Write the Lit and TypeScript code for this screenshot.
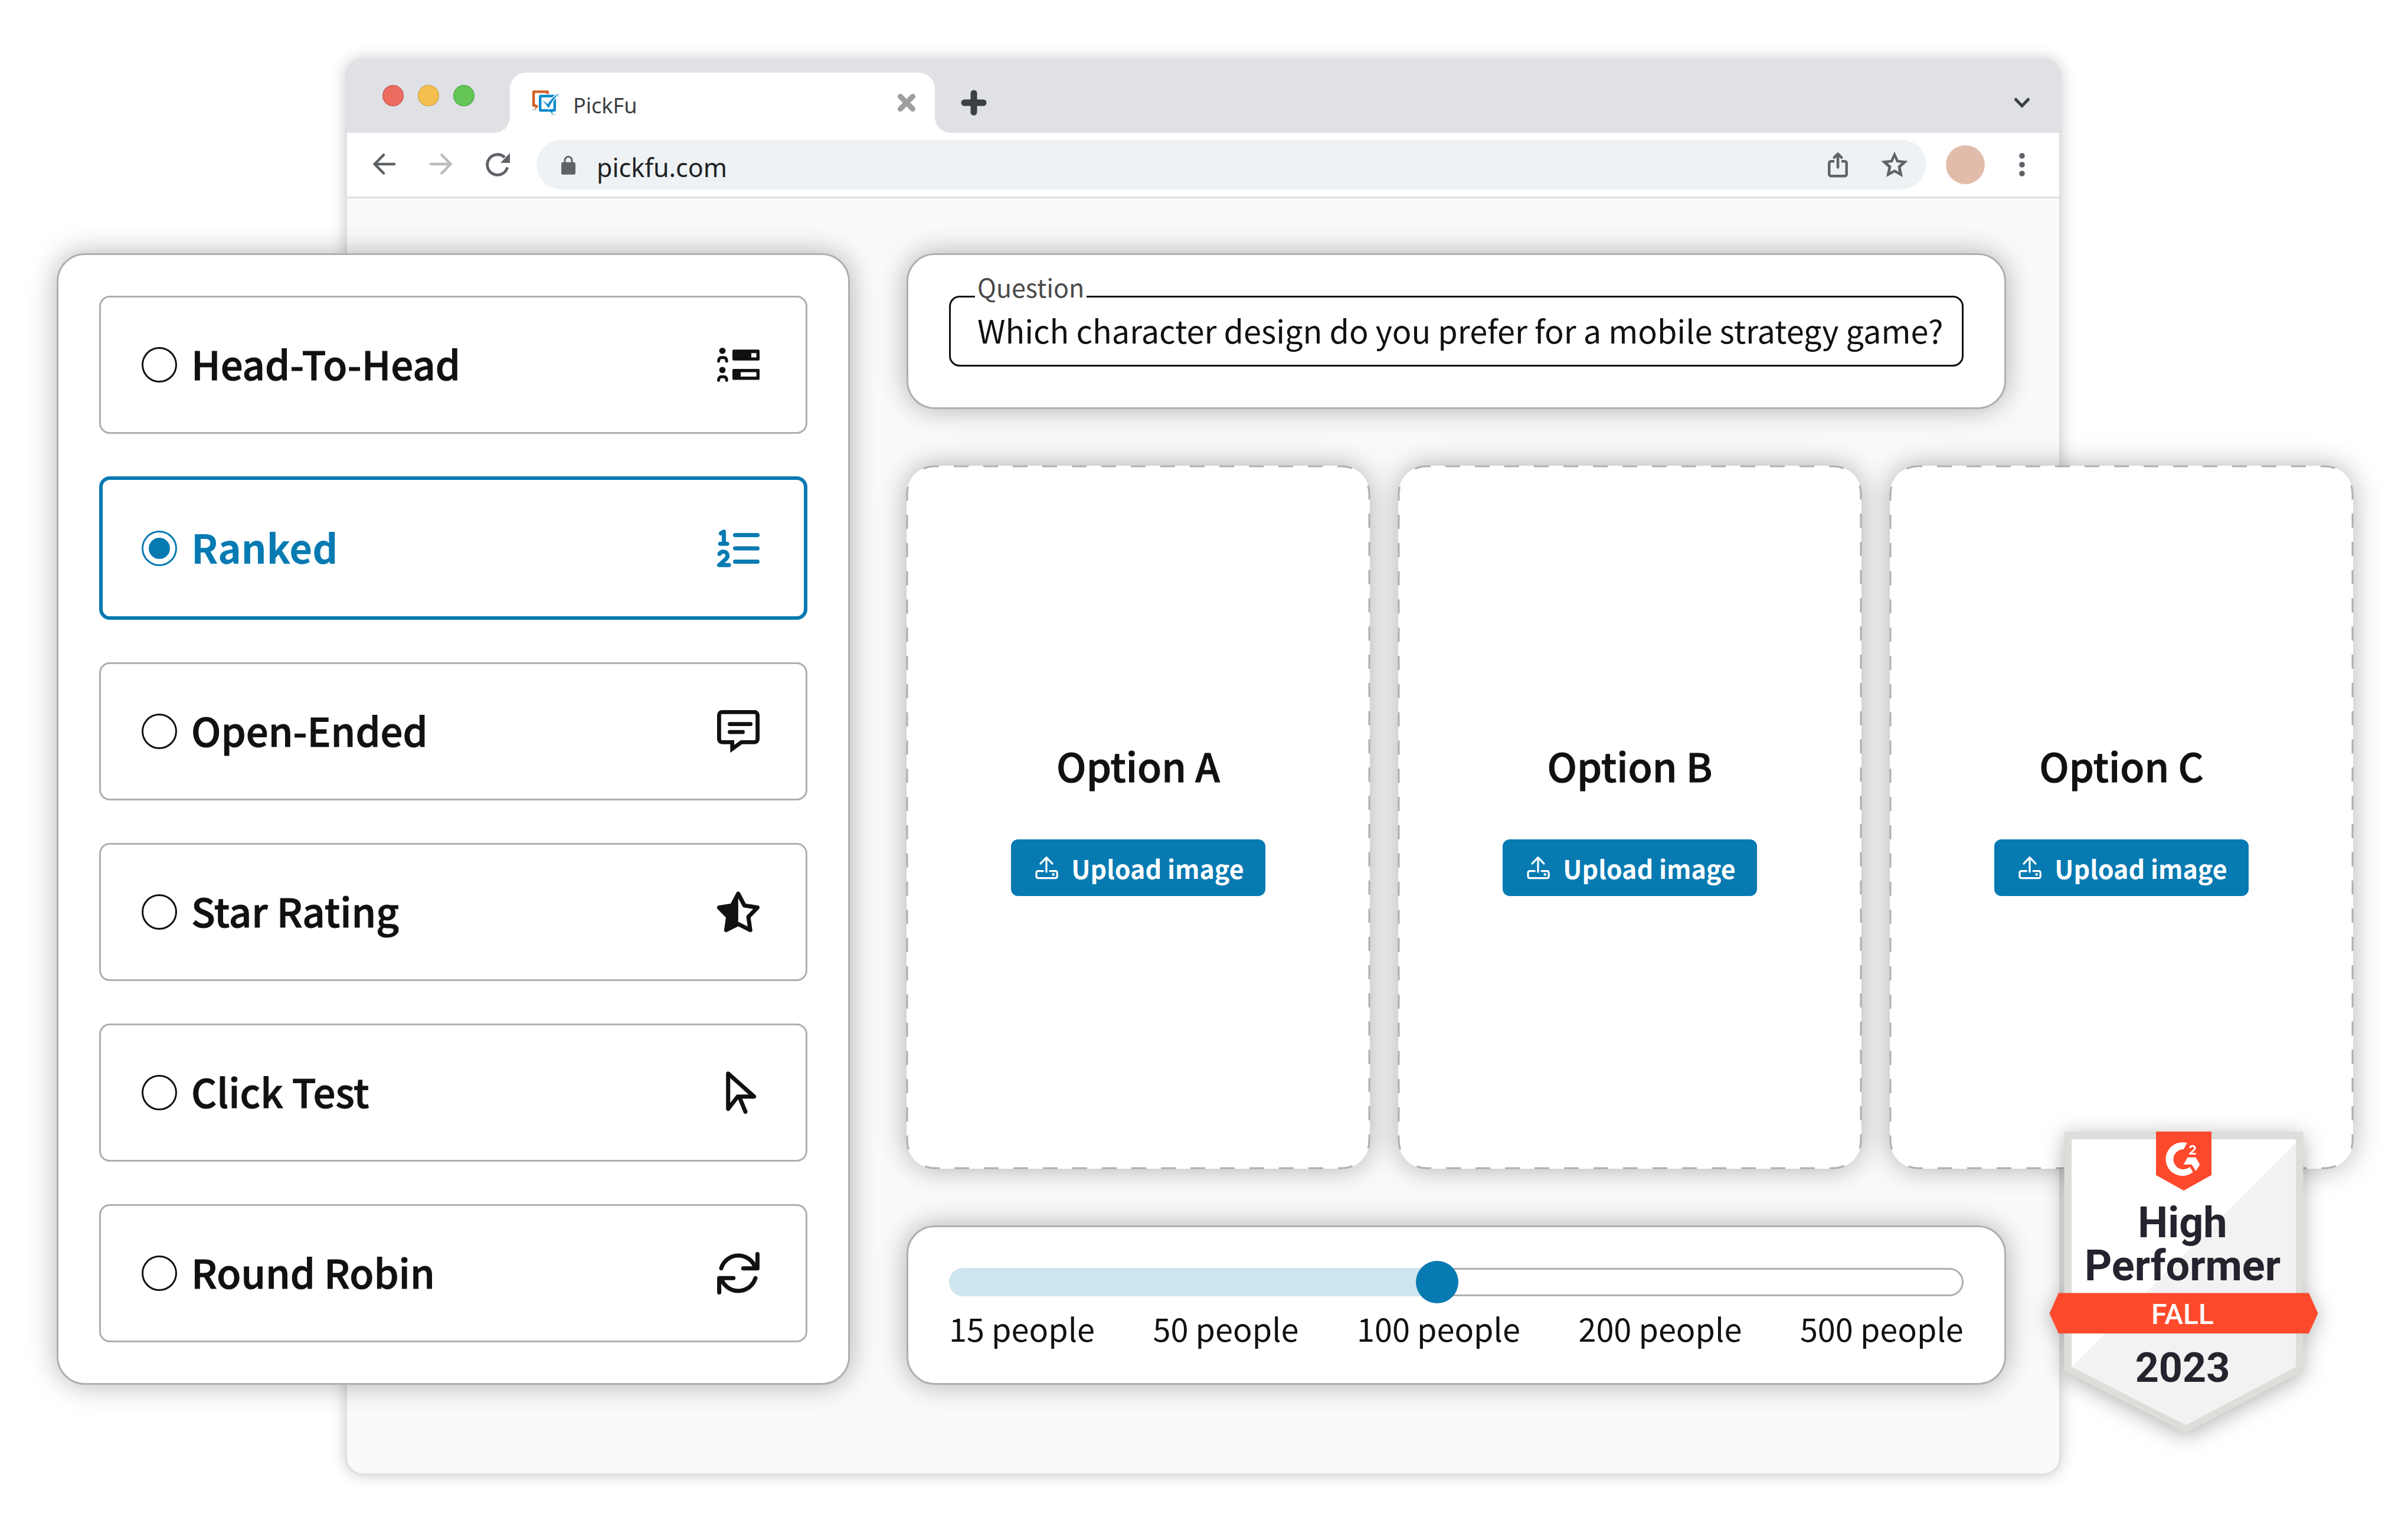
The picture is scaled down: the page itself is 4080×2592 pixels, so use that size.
import { LitElement, html, css, svg } from "lit";
import type { TemplateResult } from "lit";
import { customElement, property, state } from "lit/decorators.js";
import { classMap } from "lit/directives/class-map.js";

type PollType = { id: string; label: string; icon: TemplateResult };

const person = (dy: number) => svg`
  <g transform="translate(0 ${dy})">
    <circle cx="18" cy="21.3" r="5.4" fill="currentColor" />
    <path d="M11.5 38.8C11.5 34.8 13.6 32.8 16.6 32.8H20.2C23.2 32.8 25.2 34.8 25.2 38.8" fill="none"
      stroke="currentColor" stroke-width="5" stroke-linecap="round" />
  </g>`;

const POLL_TYPES: PollType[] = [
  {
    id: "head",
    label: "Head-To-Head",
    icon: svg`
      ${person(0)}${person(32.5)}
      <path fill="currentColor" fill-rule="evenodd"
        d="M37 19.3H79a2 2 0 0 1 2 2V35.7a2 2 0 0 1-2 2H37a2 2 0 0 1-2-2V21.3a2 2 0 0 1 2-2ZM67 25.2V32.6H75.6V25.2Z" />
      <path fill="currentColor" fill-rule="evenodd"
        d="M37 52H79a2 2 0 0 1 2 2V68.4a2 2 0 0 1-2 2H37a2 2 0 0 1-2-2V54a2 2 0 0 1 2-2ZM49 57.5V64.9H75.6V57.5Z" />`,
  },
  {
    id: "ranked",
    label: "Ranked",
    icon: svg`
      <g fill="none" stroke="currentColor" stroke-width="7" stroke-linecap="round" stroke-linejoin="round">
        <path d="M39.5 22.5H77.5M39.5 44.9H77.5M39.5 67.5H77.5" />
        <path d="M15.5 19.6L20.5 16.6V37.2M14.3 37.2H26" />
        <path d="M13 54.4C14.8 51.8 17 50.6 19.6 50.6C23.8 50.6 26.6 53.5 26.6 57.2C26.6 59.8 25.6 61.4 23.6 63.4L12.6 73.3H29" />
      </g>`,
  },
  {
    id: "open",
    label: "Open-Ended",
    icon: svg`
      <g fill="none" stroke="currentColor" stroke-width="6.8">
        <path d="M17.4 12.4H72.6A5 5 0 0 1 77.6 17.4V58.3A5 5 0 0 1 72.6 63.3H50.3L34.7 74.6V63.3H17.4A5 5 0 0 1 12.4 58.3V17.4A5 5 0 0 1 17.4 12.4Z" />
        <path d="M30.5 32.7H65.6M30.5 46.2H52.5" stroke-linecap="round" />
      </g>`,
  },
  {
    id: "star",
    label: "Star Rating",
    icon: svg`
      <path d="M44.8 14L34.3 33.7L12.4 37.3L27.7 53.3L24.4 75.7L44.8 65.4Z" fill="currentColor" />
      <path d="M44.8 14L55.3 34L77.4 37.5L62 53.3L65.2 75.7L44.8 65.4L24.4 75.7L27.7 53.3L12.4 37.5L34.3 34Z"
        fill="none" stroke="currentColor" stroke-width="7" stroke-linejoin="round" />`,
  },
  {
    id: "click",
    label: "Click Test",
    icon: svg`
      <g fill="none" stroke="currentColor" stroke-width="7" stroke-linecap="round" stroke-linejoin="round">
        <path d="M27.7 12.7L71.6 51.7H44L27.7 72.6Z" />
        <path d="M47 53L57 77.4" />
      </g>`,
  },
  {
    id: "round",
    label: "Round Robin",
    icon: svg`
      <g fill="none" stroke="currentColor" stroke-width="7" stroke-linecap="round" stroke-linejoin="round">
        <path d="M16 36.7A30.3 30.3 0 0 1 74 36.4M77.4 12.5V36.7H53.3" />
        <path d="M74 53.3A30.3 30.3 0 0 1 16 53.6M12.6 77.5V53.3H36.7" />
      </g>`,
  },
];

const OPTIONS = ["Option A", "Option B", "Option C"];
const AUDIENCES = [15, 50, 100, 200, 500];

/* Dashes for half of a card's outline: along one horizontal and one vertical edge. */
const CARD_DASHES = [
  ...Array(14).fill("25 25"),
  "25 41",
  ...Array(23).fill("24 23.8"),
  "24 41",
].join(" ");

const BASE = css`
  :host {
    box-sizing: border-box;
    display: block;
    font-family: "Noto Sans CJK SC", "Noto Sans", sans-serif;
    color: #111111;
  }
  *,
  *::before,
  *::after {
    box-sizing: border-box;
  }
  svg {
    display: block;
  }
  button {
    display: block;
    margin: 0;
    padding: 0;
    border: 0;
    background: none;
    color: inherit;
    font: inherit;
    cursor: pointer;
  }
`;

@customElement("browser-window")
class BrowserWindow extends LitElement {
  static styles = [
    BASE,
    css`
      :host {
        display: flex;
        flex-direction: column;
        border-radius: 30px;
        background: #dfe1e5;
        box-shadow: 0 0 24px rgba(50, 60, 60, 0.28);
        font-family: "Noto Sans", "Open Sans", sans-serif;
      }
      .tabs {
        display: flex;
        align-items: flex-end;
        height: 126px;
        padding: 0 42px 0 63px;
      }
      .lights {
        display: flex;
        gap: 24px;
        align-self: center;
        margin-right: 60px;
      }
      .light {
        width: 36px;
        height: 36px;
        border: 1px solid rgba(0, 0, 0, 0.2);
        border-radius: 50%;
      }
      .red {
        background: #ed6b5f;
      }
      .yellow {
        background: #f5bf4f;
      }
      .green {
        background: #62c554;
      }
      .tab {
        position: relative;
        display: flex;
        align-items: center;
        gap: 24px;
        width: 720px;
        height: 102px;
        padding: 0 24px 0 35px;
        border-radius: 27px 27px 0 0;
        background: #ffffff;
      }
      .tab::before,
      .tab::after {
        content: "";
        position: absolute;
        bottom: 0;
        width: 27px;
        height: 27px;
      }
      .tab::before {
        right: 100%;
        background: radial-gradient(circle at 0 0, transparent 27px, #ffffff 27px);
      }
      .tab::after {
        left: 100%;
        background: radial-gradient(circle at 100% 0, transparent 27px, #ffffff 27px);
      }
      .title {
        flex: 1;
        padding-top: 10px;
        color: #3c4043;
        font-size: 36px;
        line-height: 48px;
      }
      .icon {
        flex: none;
        width: 48px;
        height: 48px;
      }
      .close {
        color: #9e9e9e;
      }
      .add {
        height: 102px;
        margin-left: 42px;
        padding: 27px 0;
        color: #3c4043;
      }
      .more-tabs {
        height: 102px;
        margin-left: auto;
        padding: 27px 0;
        color: #3c4043;
      }
      .body {
        flex: 1;
        margin: 0 3px 3px;
        border-radius: 0 0 27px 27px;
        background: #fafafa;
        overflow: hidden;
      }
      .toolbar {
        display: flex;
        align-items: center;
        height: 111px;
        padding: 0 39px 0 40px;
        border-bottom: 3px solid #dfe1e5;
        background: #ffffff;
        color: #5f6368;
      }
      .nav {
        display: flex;
        gap: 48px;
      }
      .faded {
        color: #babcbe;
      }
      .address {
        display: flex;
        flex: 1;
        align-items: center;
        height: 84px;
        margin: 0 33px 0 41px;
        padding: 0 30px;
        border-radius: 42px;
        background: #eef2f4;
      }
      .url {
        flex: 1;
        min-width: 0;
        padding: 10px 0 0 24px;
        border: 0;
        outline: 0;
        background: none;
        color: #202124;
        font: 43px/60px "Noto Sans", "Open Sans", sans-serif;
      }
      .page-actions {
        display: flex;
        gap: 48px;
        color: #616467;
      }
      .avatar {
        width: 66px;
        height: 66px;
        margin-right: 39px;
        border-radius: 50%;
        background: #e2bcab;
      }
    `,
  ];

  private icon(body: TemplateResult) {
    return html`<svg class="icon" viewBox="0 0 48 48" aria-hidden="true">${body}</svg>`;
  }

  render() {
    return html`
      <div class="tabs">
        <div class="lights">
          <span class="light red"></span>
          <span class="light yellow"></span>
          <span class="light green"></span>
        </div>
        <div class="tab">
          ${this.icon(svg`
            <ellipse cx="6" cy="36.2" rx="4.6" ry="0.8" fill="#b9b9b9" />
            <ellipse cx="38.6" cy="44.2" rx="4.6" ry="0.8" fill="#b9b9b9" />
            <path d="M28.8 10V5.4H5.1V28.8H9.5" fill="none" stroke="#d65f28" stroke-width="4.4" stroke-linejoin="round" />
            <path d="M7 29L12.8 27.4V31L6.4 36L8.4 30.6Z" fill="#d65f28" />
            <rect x="12.5" y="9.2" width="32" height="31.2" rx="3" fill="#ffffff" />
            <rect x="16.2" y="12.8" width="24.6" height="24.2" rx="1" fill="none" stroke="#0b8bcc" stroke-width="4.4" />
            <path d="M32.4 38L37.4 43.4L37 38Z" fill="#0b8bcc" />
            <path d="M20 20.6C23 21.6 26 23.6 28.8 26.8C34 19 40.5 12 49 7.7C41.5 14.6 35 23 30.4 33.4C27.6 28.8 24.4 24.6 20 20.6Z"
              fill="#0b8bcc" stroke="#ffffff" stroke-width="3" paint-order="stroke" />`)}
          <span class="title">PickFu</span>
          <button class="close" aria-label="Close tab">
            ${this.icon(svg`<path d="M13.5 13.5L34.5 34.5M34.5 13.5L13.5 34.5" stroke="currentColor" stroke-width="9" stroke-linecap="round" />`)}
          </button>
        </div>
        <button class="add" aria-label="New tab">
          ${this.icon(svg`<path d="M24 8V40M8 24H40" stroke="currentColor" stroke-width="11" stroke-linecap="round" />`)}
        </button>
        <button class="more-tabs" aria-label="Search tabs">
          ${this.icon(svg`<path d="M13.5 18.5L24 29.5L34.5 18.5" fill="none" stroke="currentColor" stroke-width="5" stroke-linecap="round" />`)}
        </button>
      </div>
      <div class="body">
        <div class="toolbar">
          <div class="nav">
            <button aria-label="Back">
              ${this.icon(svg`<path d="M40 23H7M22 7.5L6.8 23L22 38.5" fill="none" stroke="currentColor" stroke-width="4.6" stroke-linecap="round" />`)}
            </button>
            <button class="faded" aria-label="Forward">
              ${this.icon(svg`<path d="M6 23H39M24.5 7.5L39.4 23L24.5 38.5" fill="none" stroke="currentColor" stroke-width="4.6" stroke-linecap="round" />`)}
            </button>
            <button aria-label="Reload">
              ${this.icon(svg`
                <path d="M39.7 28.5A17.3 17.3 0 1 1 35.2 11.8" fill="none" stroke="currentColor" stroke-width="4.8" />
                <path d="M44 4.3V21H28Z" fill="currentColor" />`)}
            </button>
          </div>
          <div class="address">
            ${this.icon(svg`
              <rect x="12" y="19.7" width="24" height="21" rx="3" fill="currentColor" />
              <path d="M18 21V16.5A6 6 0 0 1 30 16.5V21" fill="none" stroke="currentColor" stroke-width="3" />`)}
            <input class="url" type="text" aria-label="Address" .value=${"pickfu.com"} />
            <div class="page-actions">
              <button aria-label="Share">
                ${this.icon(svg`
                  <path d="M18 18.3H12.3A3 3 0 0 0 9.3 21.3V40.3A3 3 0 0 0 12.3 43.3H35.7A3 3 0 0 0 38.7 40.3V21.3A3 3 0 0 0 35.7 18.3H30"
                    fill="none" stroke="currentColor" stroke-width="4.6" />
                  <path d="M24 28.6V6M17.8 11.8L24 5.6L30.2 11.8" fill="none" stroke="currentColor" stroke-width="4.6"
                    stroke-linecap="round" stroke-linejoin="round" />`)}
              </button>
              <button aria-label="Bookmark">
                ${this.icon(svg`<path fill="currentColor" fill-rule="evenodd"
                  d="M24 1.7L30.4 16L46.6 17.7L34.6 28.8L38 45L24 37.2L10 45L13.4 28.8L1.4 17.7L17.6 16ZM24 12L20.6 19.9L12.4 20.9L18.6 26.8L16.8 35.9L24 32.2L31.2 35.9L29.4 26.8L35.6 20.9L27.4 19.9Z" />`)}
              </button>
            </div>
          </div>
          <span class="avatar"></span>
          <button aria-label="Menu">
            ${this.icon(svg`<g fill="currentColor"><circle cx="24" cy="9" r="4.8" /><circle cx="24" cy="24" r="4.8" /><circle cx="24" cy="39" r="4.8" /></g>`)}
          </button>
        </div>
      </div>
    `;
  }
}

@customElement("poll-type-picker")
class PollTypePicker extends LitElement {
  @state() private selected = "ranked";

  static styles = [
    BASE,
    css`
      :host {
        padding: 69px;
        border: 3px solid #afafaf;
        border-radius: 48px;
        background: #ffffff;
        box-shadow: 0 0 48px rgba(0, 0, 0, 0.3);
      }
      .list {
        display: grid;
        gap: 72px;
      }
      .type {
        display: flex;
        align-items: center;
        gap: 24px;
        min-height: 234px;
        padding: 0 69px;
        border: 3px solid #afafaf;
        border-radius: 18px;
        font-size: 67px;
        font-weight: 500;
        line-height: 96px;
        cursor: pointer;
        -webkit-text-stroke: 1px currentColor;
      }
      .selected {
        min-height: 243px;
        padding: 0 66px;
        border: 6px solid #077ab2;
        color: #077ab2;
        font-weight: 700;
        -webkit-text-stroke: 0;
      }
      .radio {
        display: grid;
        flex: none;
        place-items: center;
        width: 60px;
        height: 60px;
        margin: 0;
        border: 3px solid currentColor;
        border-radius: 50%;
        appearance: none;
        color: inherit;
      }
      .radio:checked::before {
        content: "";
        width: 36px;
        height: 36px;
        border-radius: 50%;
        background: currentColor;
      }
      .name {
        flex: 1;
        padding-bottom: 6px;
      }
      .icon {
        flex: none;
        width: 90px;
        height: 90px;
      }
    `,
  ];

  render() {
    return html`
      <div class="list" role="radiogroup" aria-label="Poll type">
        ${POLL_TYPES.map(
          ({ id, label, icon }) => html`
            <label class=${classMap({ type: true, selected: id === this.selected })}>
              <input
                class="radio"
                type="radio"
                name="poll-type"
                .checked=${id === this.selected}
                @change=${() => (this.selected = id)}
              />
              <span class="name">${label}</span>
              <svg class="icon" viewBox="0 0 90 90" aria-hidden="true">${icon}</svg>
            </label>
          `,
        )}
      </div>
    `;
  }
}

@customElement("option-card")
class OptionCard extends LitElement {
  @property() heading = "";

  static styles = [
    BASE,
    css`
      :host {
        position: relative;
        display: flex;
        flex-direction: column;
        align-items: center;
        justify-content: center;
        gap: 72px;
        padding-bottom: 4px;
        border-radius: 48px;
        background: #ffffff;
        box-shadow: 0 0 48px rgba(0, 0, 0, 0.3);
      }
      .outline {
        position: absolute;
        inset: 1px;
        width: calc(100% - 2px);
        height: calc(100% - 2px);
        overflow: visible;
        pointer-events: none;
      }
      .outline rect {
        width: 100%;
        height: 100%;
      }
      .heading {
        margin: 0;
        padding-bottom: 6px;
        font-size: 67px;
        font-weight: 500;
        line-height: 96px;
        -webkit-text-stroke: 1px currentColor;
      }
      .upload {
        display: flex;
        align-items: center;
        gap: 18px;
        height: 96px;
        padding: 0 36px;
        border-radius: 12px;
        background: #077ab2;
        color: #ffffff;
        font-size: 43px;
        font-weight: 700;
        line-height: 60px;
      }
      .icon {
        width: 48px;
        height: 48px;
      }
    `,
  ];

  render() {
    return html`
      <svg class="outline" aria-hidden="true">
        <rect rx="47" fill="none" stroke="#afafaf" stroke-width="3" stroke-dasharray=${CARD_DASHES} stroke-dashoffset="18" />
      </svg>
      <h2 class="heading">${this.heading}</h2>
      <button class="upload">
        <svg class="icon" viewBox="0 0 48 48" aria-hidden="true">
          <g fill="none" stroke="#ffffff" stroke-width="3.2" stroke-linecap="round" stroke-linejoin="round">
            <path d="M24 31V6.6M14 17.2L24 6.6L34 17.2" />
            <path d="M18.4 29.6H9.8A2.8 2.8 0 0 0 7 32.4V38.8A2.8 2.8 0 0 0 9.8 41.6H39.4A2.8 2.8 0 0 0 42.2 38.8V32.4A2.8 2.8 0 0 0 39.4 29.6H30" />
          </g>
          <circle cx="35.7" cy="35.5" r="2.2" fill="#ffffff" />
        </svg>
        Upload image
      </button>
    `;
  }
}

@customElement("award-badge")
class AwardBadge extends LitElement {
  static styles = [
    BASE,
    css`
      :host {
        width: 456px;
        height: 512px;
        font-family: Roboto, "Liberation Sans", sans-serif;
        filter: drop-shadow(0 6px 18px rgba(0, 0, 0, 0.3));
      }
      .badge {
        display: grid;
        width: 100%;
        height: 100%;
      }
      .shape {
        grid-area: 1 / 1;
        width: 100%;
        height: 100%;
      }
      .copy {
        display: flex;
        flex-direction: column;
        grid-area: 1 / 1;
        align-items: center;
        z-index: 1;
        padding: 118px 4px 0 0;
        color: #24242e;
        text-align: center;
      }
      .title {
        font-size: 72px;
        font-weight: 700;
        line-height: 73px;
      }
      .season {
        margin-top: 12px;
        color: #ffffff;
        font-size: 48px;
        font-weight: 500;
        line-height: 68px;
      }
      .year {
        margin-top: 20px;
        font-size: 70px;
        font-weight: 700;
        line-height: 72px;
      }
      .power {
        fill: #ffffff;
        font-family: Inter, sans-serif;
        font-size: 22px;
        font-weight: 700;
      }
    `,
  ];

  render() {
    return html`
      <div class="badge">
        <svg class="shape" viewBox="0 0 456 512">
          <path d="M25.5 0.5H430.5V405.8L231.6 510.6L25.5 405.8Z" fill="#dcdeda" />
          <path d="M38 13H418V398.5L231.6 497L38 398.5Z" fill="#ffffff" />
          <path d="M418 18.5V398.5L231.6 497L38 398.5Z" fill="#f2f2f2" />
          <path d="M181 0H275V73.7L228 100L181 73.7Z" fill="#ff492c" />
          <path d="M233.6 19.3A28.4 28.4 0 1 0 243.7 68.8L238.4 60A17 17 0 1 1 228 30Z" fill="#ffffff" />
          <path d="M234.7 43.7H248.3L255.3 55.7L248.7 67L241.3 55.7H227.7Z" fill="#ffffff" />
          <text class="power" x="243" y="39" text-anchor="middle">2</text>
          <path d="M16 273.4H440L455.5 308L440 342H16L0.5 308Z" fill="#ff492c" />
        </svg>
        <div class="copy">
          <span class="title">High<br />Performer</span>
          <span class="season">FALL</span>
          <span class="year">2023</span>
        </div>
      </div>
    `;
  }
}

@customElement("app-root")
class AppRoot extends LitElement {
  @state() private audience = 48;

  static styles = [
    BASE,
    css`
      :host {
        position: relative;
        display: grid;
        min-height: 100vh;
        background: #ffffff;
        overflow: hidden;
      }
      .window {
        grid-area: 1 / 1;
        margin: 99px 588px 93px 585px;
      }
      .workspace {
        position: relative;
        grid-area: 1 / 1;
        display: grid;
        grid-template-columns: 1344fr 2451fr;
        gap: 96px;
        padding: 429px 93px 246px 96px;
      }
      .composer {
        display: flex;
        flex-direction: column;
        gap: 96px;
        min-width: 0;
      }
      .card {
        width: 76%;
        border: 3px solid #afafaf;
        border-radius: 48px;
        background: #ffffff;
        box-shadow: 0 0 48px rgba(0, 0, 0, 0.3);
      }
      .question {
        position: relative;
        padding: 69px;
      }
      .question-label {
        position: absolute;
        top: 32px;
        left: 113px;
        padding: 0 4px;
        background: #ffffff;
        color: #4a4a4a;
        font-size: 43px;
        line-height: 42px;
      }
      .question-input {
        display: block;
        width: 100%;
        height: 120px;
        padding: 0 24px 5px 45px;
        border: 3px solid #111111;
        border-radius: 18px;
        outline: 0;
        background: #ffffff;
        color: #111111;
        font: inherit;
        font-size: 54px;
        line-height: 78px;
      }
      .options {
        display: grid;
        flex: 1;
        grid-template-columns: repeat(3, minmax(0, 1fr));
        gap: 48px;
      }
      .audience {
        padding: 57px 69px;
      }
      .slider {
        display: block;
        width: 100%;
        height: 72px;
        margin: 0;
        background: none;
        appearance: none;
      }
      .slider::-webkit-slider-runnable-track {
        height: 48px;
        border: 3px solid transparent;
        border-radius: 24px;
        background:
          linear-gradient(to right, #cde5ef var(--fill), transparent var(--fill)) border-box,
          linear-gradient(#ffffff, #ffffff) padding-box,
          linear-gradient(#afafaf, #afafaf) border-box;
      }
      .slider::-webkit-slider-thumb {
        width: 72px;
        height: 72px;
        margin-top: -15px;
        border: 0;
        border-radius: 50%;
        background: #077ab2;
        appearance: none;
      }
      .ticks {
        display: flex;
        justify-content: space-between;
        margin-top: 6px;
        font-size: 54px;
        line-height: 72px;
      }
      .award {
        position: absolute;
        right: 152px;
        bottom: 163px;
      }
    `,
  ];

  private onAudience(event: Event) {
    this.audience = Number((event.target as HTMLInputElement).value);
  }

  render() {
    return html`
      <browser-window class="window"></browser-window>
      <main class="workspace">
        <poll-type-picker></poll-type-picker>
        <div class="composer">
          <section class="card question">
            <label class="question-label" for="question">Question</label>
            <input
              class="question-input"
              id="question"
              type="text"
              .value=${"Which character design do you prefer for a mobile strategy game?"}
            />
          </section>
          <section class="options">
            ${OPTIONS.map((name) => html`<option-card .heading=${name}></option-card>`)}
          </section>
          <section class="card audience">
            <input
              class="slider"
              type="range"
              min="0"
              max="100"
              aria-label="Number of people"
              .value=${String(this.audience)}
              style="--fill: ${this.audience}%"
              @input=${this.onAudience}
            />
            <div class="ticks">${AUDIENCES.map((count) => html`<span>${count} people</span>`)}</div>
          </section>
        </div>
      </main>
      <award-badge class="award"></award-badge>
    `;
  }
}
